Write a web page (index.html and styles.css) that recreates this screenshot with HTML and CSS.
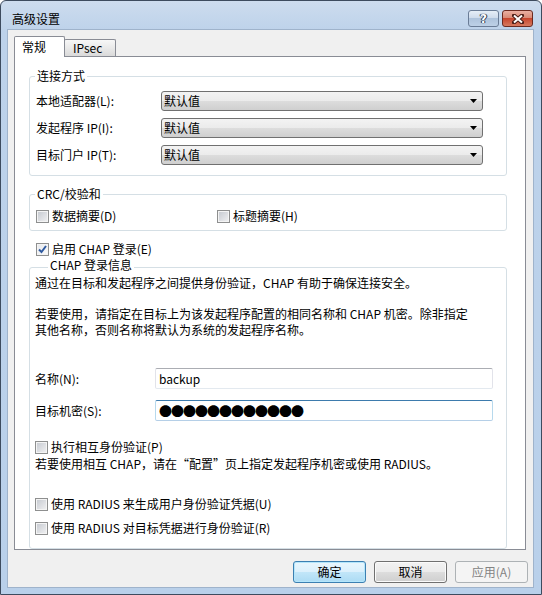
FILE: index.html
```html
<!DOCTYPE html>
<html lang="zh-CN">
<head>
  <meta charset="UTF-8" />
  <title>高级设置</title>
  <link rel="stylesheet" href="styles.css">
</head>
<body>
  <div class="window">
    <div class="titlebar">
      <span class="title">高级设置</span>
      <div class="caption-btns">
        <span class="cap-btn help">?</span>
        <span class="cap-btn close">
          <svg width="12" height="10" viewBox="0 0 12 10">
            <path d="M2 1.5 L10 8.5 M10 1.5 L2 8.5" stroke="#4a1d16" stroke-width="4" stroke-linecap="square" />
            <path d="M2 1.5 L10 8.5 M10 1.5 L2 8.5" stroke="#fff" stroke-width="2" />
          </svg>
        </span>
      </div>
    </div>

    <div class="client">
      <div class="tabs">
        <span class="tab active">常规</span>
        <span class="tab">IPsec</span>
      </div>

      <div class="panel">
        <div class="group g-conn">
          <div class="group-title">连接方式</div>
          <div class="rows">
            <div class="row">
              <span class="lbl">本地适配器(L):</span>
              <div class="combo">默认值<svg class="arrow" width="7" height="4"><polygon points="0,0 7,0 3.5,4" fill="#000" /></svg></div>
            </div>
            <div class="row">
              <span class="lbl">发起程序 IP(I):</span>
              <div class="combo">默认值<svg class="arrow" width="7" height="4"><polygon points="0,0 7,0 3.5,4" fill="#000" /></svg></div>
            </div>
            <div class="row">
              <span class="lbl">目标门户 IP(T):</span>
              <div class="combo">默认值<svg class="arrow" width="7" height="4"><polygon points="0,0 7,0 3.5,4" fill="#000" /></svg></div>
            </div>
          </div>
        </div>

        <div class="group g-crc">
          <div class="group-title">CRC/校验和</div>
          <div class="check-row">
            <label class="check first"><span class="box"></span>数据摘要(D)</label>
            <label class="check"><span class="box"></span>标题摘要(H)</label>
          </div>
        </div>

        <label class="check chap-on">
          <span class="box">
            <svg width="11" height="11" viewBox="0 0 11 11"><path d="M2 5.5 L4.5 8 L9 2" fill="none" stroke="#2f5aa0" stroke-width="2" /></svg>
          </span>启用 CHAP 登录(E)
        </label>

        <div class="group g-chap">
          <div class="group-title">CHAP 登录信息</div>
          <p class="line intro">通过在目标和发起程序之间提供身份验证，CHAP 有助于确保连接安全。</p>
          <p class="note">若要使用，请指定在目标上为该发起程序配置的相同名称和 CHAP 机密。除非指定<br>其他名称，否则名称将默认为系统的发起程序名称。</p>
          <div class="field name-row">
            <span class="lbl">名称(N):</span>
            <div class="textbox">backup</div>
          </div>
          <div class="field secret-row">
            <span class="lbl">目标机密(S):</span>
            <div class="textbox focused"><span class="dots">●●●●●●●●●●●●</span></div>
          </div>
          <label class="check mutual"><span class="box"></span>执行相互身份验证(P)</label>
          <p class="line hint">若要使用相互 CHAP，请在“配置”页上指定发起程序机密或使用 RADIUS。</p>
          <label class="check radius-1"><span class="box"></span>使用 RADIUS 来生成用户身份验证凭据(U)</label>
          <label class="check radius-2"><span class="box"></span>使用 RADIUS 对目标凭据进行身份验证(R)</label>
        </div>
      </div>

      <div class="buttons">
        <button class="btn default">确定</button>
        <button class="btn">取消</button>
        <button class="btn" disabled>应用(A)</button>
      </div>
    </div>
  </div>
</body>
</html>
```

FILE: styles.css
```css
html, body {
  margin: 0;
}
body {
  font-family: "Noto Sans CJK SC", sans-serif;
  font-size: 12px;
  line-height: 16px;
  color: #000;
  background: #fff;
}

/* window frame */
.window {
  box-sizing: border-box;
  width: 542px;
  height: 595px;
  border: 1px solid #3d4b5e;
  border-radius: 6px 6px 0 0;
  background: linear-gradient(#cddcee, #bdd2ea 30px, #b9d0ea);
  display: flex;
  flex-direction: column;
}
.titlebar {
  height: 28px;
  display: flex;
  justify-content: space-between;
  align-items: flex-start;
  padding: 0 8px 0 11px;
}
.title {
  margin-top: 10px;
}
.caption-btns {
  display: flex;
  gap: 3px;
  margin-top: 9px;
}
.cap-btn {
  box-sizing: border-box;
  width: 31px;
  height: 17px;
  border-radius: 3px;
  display: flex;
  align-items: center;
  justify-content: center;
}
.help {
  border: 1px solid #6a7c96;
  background: linear-gradient(#e6eef7, #cfdcec 45%, #aec3dc 50%, #bdd0e6);
  color: #fff;
  font-weight: bold;
  font-family: "DejaVu Sans", sans-serif;
  font-size: 12px;
  text-shadow: 0 0 1px #2c3a50, 0 0 1px #2c3a50, 1px 0 0 #2c3a50, -1px 0 0 #2c3a50;
}
.close {
  border: 1px solid #6b2a20;
  background: linear-gradient(#eab0a2, #d98a76 45%, #c7462e 50%, #d67a5f);
}

/* client area */
.client {
  flex: 1;
  margin: 0 7px 6px 6px;
  border: 1px solid #9fb3cb;
  background: #f0f0f0;
  padding: 6px 0 0 6px;
}
.tabs {
  display: flex;
  align-items: flex-start;
  height: 21px;
  margin-bottom: -1px;
}
.tab {
  box-sizing: border-box;
  border: 1px solid #898c95;
  border-bottom: 0;
  border-radius: 2px 2px 0 0;
}
.tab.active {
  position: relative;
  width: 51px;
  height: 21px;
  padding: 2px 0 0 7px;
  background: #fff;
}
.tab:not(.active) {
  width: 52px;
  height: 17px;
  margin: 3px 0 0 -1px;
  padding: 0 0 0 8px;
  background: linear-gradient(#f7f7f7, #e9e9e9 50%, #dadada);
}
.panel {
  box-sizing: border-box;
  height: 494px;
  margin-right: 7px;
  border: 1px solid #898c95;
  background: #fff;
  padding: 0 18px 0 14px;
}

/* group boxes */
.group {
  border: 1px solid #d5dfe5;
  border-radius: 3px;
}
.group-title {
  width: fit-content;
  line-height: 14px;
  margin: -8px 0 0 -1px;
  padding: 0 2px;
  background: #fff;
}
.g-conn {
  margin-top: 19px;
  padding: 0 0 10px 6px;
}
.rows {
  display: flex;
  flex-direction: column;
  gap: 7px;
  margin-top: 8px;
}
.row {
  display: flex;
  align-items: center;
  height: 20px;
}
.row .lbl {
  width: 125px;
}
.combo {
  box-sizing: border-box;
  width: 322px;
  height: 20px;
  line-height: 18px;
  padding-left: 2px;
  border: 1px solid #707070;
  border-radius: 3px;
  background: linear-gradient(#f3f3f3, #ebebeb 50%, #dddddd 50%, #cfcfcf);
  display: flex;
  align-items: center;
  justify-content: space-between;
}
.combo .arrow {
  margin-right: 5px;
}

.g-crc {
  margin-top: 18px;
  padding: 0 0 6px 6px;
}
.check-row {
  display: flex;
  margin-top: 7px;
}
.check-row .first {
  width: 181px;
}

/* checkboxes */
.check {
  display: flex;
  align-items: center;
  height: 16px;
}
.box {
  box-sizing: border-box;
  width: 13px;
  height: 13px;
  margin-right: 3px;
  border: 1px solid #8e8f8f;
  box-shadow: inset 0 0 0 1px #f4f4f4;
  background: linear-gradient(135deg, #c4c8cf, #f2f2f3);
  display: flex;
  align-items: center;
  justify-content: center;
}
.chap-on {
  margin: 10px 0 0 7px;
  width: fit-content;
}
.chap-on .box {
  background: linear-gradient(135deg, #e6e8ec, #fbfbfb);
}

/* CHAP group */
.g-chap {
  margin-top: 10px;
  padding: 0 0 12px 5px;
}
.g-chap .group-title {
  line-height: 12px;
  margin: -9px 0 0 13px;
}
p {
  margin: 0;
}
.intro {
  margin-top: 4px;
}
.note {
  margin-top: 15px;
  line-height: 16px;
}
.field {
  display: flex;
  align-items: center;
  height: 21px;
}
.field .lbl {
  width: 120px;
}
.name-row {
  margin-top: 30px;
}
.secret-row {
  margin-top: 11px;
}
.textbox {
  box-sizing: border-box;
  width: 338px;
  height: 21px;
  line-height: 19px;
  padding-left: 3px;
  border: 1px solid #e2e3ea;
  border-top-color: #abadb3;
  border-bottom-color: #e3e9ef;
  border-radius: 2px;
  background: #fff;
}
.textbox.focused {
  border-color: #b7d9ed;
  border-top-color: #3d7bad;
  border-bottom-color: #b5cfe7;
}
.dots {
  font-size: 13px;
  letter-spacing: -1px;
}
.mutual {
  margin-top: 18px;
}
.hint {
  margin-top: 1px;
}
.radius-1 {
  margin-top: 24px;
}
.radius-2 {
  margin-top: 8px;
}

/* dialog buttons */
.buttons {
  display: flex;
  justify-content: flex-end;
  gap: 8px;
  margin-top: 11px;
  padding-right: 5px;
}
.btn {
  box-sizing: border-box;
  width: 73px;
  height: 22px;
  padding: 0;
  font: inherit;
  color: #000;
  border: 1px solid #707070;
  border-radius: 3px;
  box-shadow: inset 0 0 0 1px #fbfbfb;
  background: linear-gradient(#f2f2f2, #ebebeb 50%, #dddddd 50%, #cfcfcf);
}
.btn.default {
  border-color: #3c7fb1;
  box-shadow: inset 0 0 0 1px #b4e6fb;
  background: linear-gradient(#e9f6fd, #dbf0fc 50%, #c2e6f9 50%, #acdbf4);
}
.btn:disabled {
  border-color: #adb2b5;
  box-shadow: none;
  background: #f4f4f4;
  color: #838383;
}
```
